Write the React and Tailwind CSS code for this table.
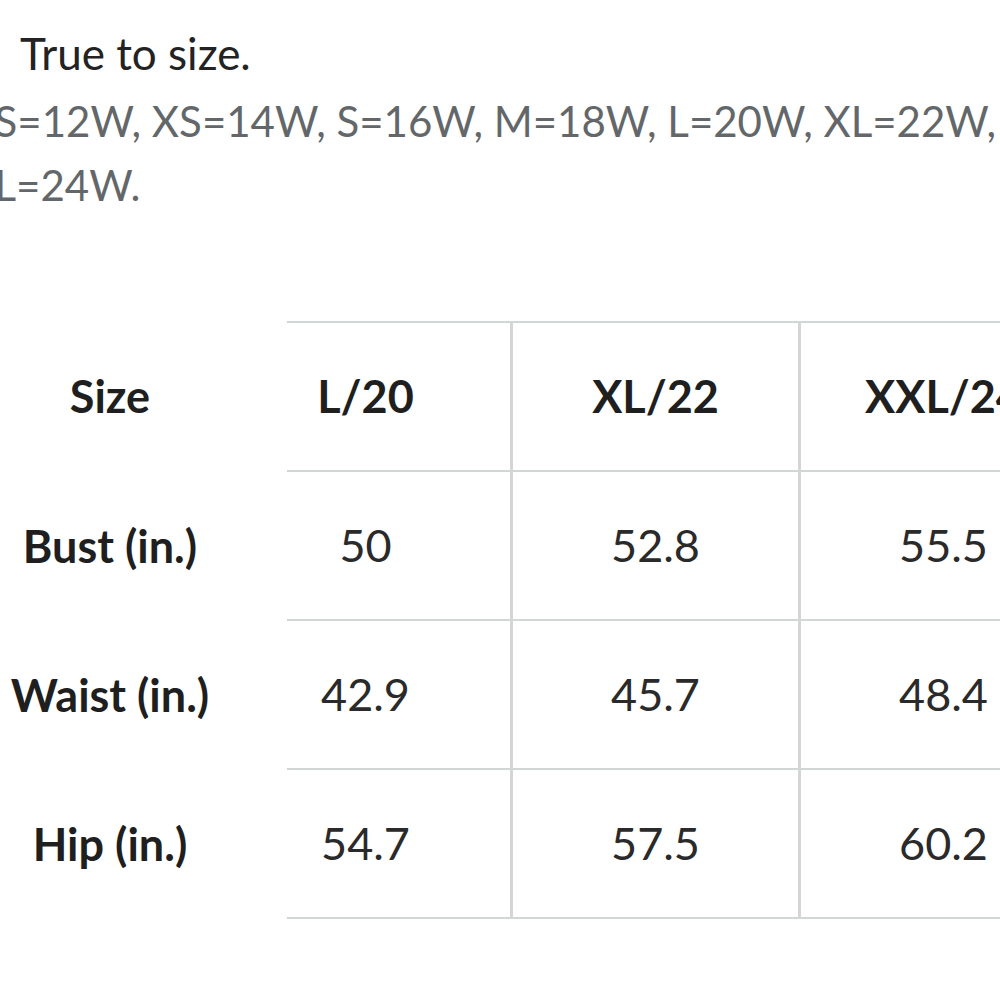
const SIZES = ['L/20', 'XL/22', 'XXL/24'];
const ROWS = [
    { label: 'Bust (in.)', values: ['50', '52.8', '55.5'] },
    { label: 'Waist (in.)', values: ['42.9', '45.7', '48.4'] },
    { label: 'Hip (in.)', values: ['54.7', '57.5', '60.2'] },
];

const font = { fontFamily: 'Lato, "Noto Sans", sans-serif' };

function Row({ label, values, header, first }) {
    const text = header ? 'font-bold text-[#1f1f1f]' : 'text-[#2a2a2a]';
    const top = first ? 'border-t-2' : '';
    return (
        <div className={`flex shrink-0 ${first ? 'h-[151px]' : 'h-[149px]'}`}>
            <div className="w-[220px] shrink-0 flex items-center justify-center font-bold text-[#1f1f1f]">{label}</div>
            <div className="w-[67px] shrink-0" />
            <div className={`w-[223px] shrink-0 pr-[66px] flex items-center justify-center border-b-2 border-[#d3d6d6] ${top} ${text}`}>
                {values[0]}
            </div>
            <div className={`w-[288px] shrink-0 flex items-center justify-center border-l-[3px] border-b-2 border-[#d3d6d6] ${top} ${text}`}>
                {values[1]}
            </div>
            <div className={`w-[288px] shrink-0 flex items-center justify-center border-l-[3px] border-b-2 border-[#d3d6d6] ${top} ${text}`}>
                {values[2]}
            </div>
        </div>
    );
}

export default function App() {
    return (
        <div className="w-[1000px] h-[1000px] overflow-hidden bg-white" style={font}>
            <div className="pt-[21px] leading-[64px]">
                <p className="pl-[20px] text-[44px] text-[#232323]">True to size.</p>
                <p className="mt-[4px] ml-[-60px] whitespace-nowrap text-[42px] text-[#63676a]">
                    XXS=12W, XS=14W, S=16W, M=18W, L=20W, XL=22W,<br />XXL=24W.
                </p>
            </div>
            <div className="mt-[104px] flex flex-col text-[45px]">
                <Row label="Size" values={SIZES} header first />
                {ROWS.map(r => (
                    <Row key={r.label} label={r.label} values={r.values} />
                ))}
            </div>
        </div>
    );
}
